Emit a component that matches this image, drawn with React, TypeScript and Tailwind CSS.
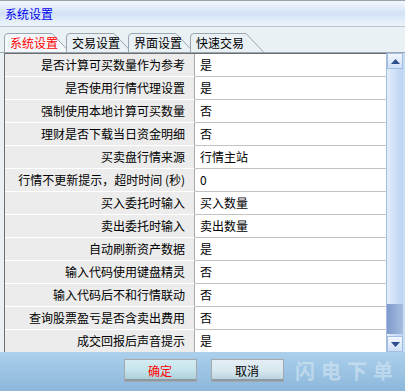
import React from 'react';

const rows: [string, string][] = [
  ['是否计算可买数量作为参考', '是'],
  ['是否使用行情代理设置', '是'],
  ['强制使用本地计算可买数量', '否'],
  ['理财是否下载当日资金明细', '否'],
  ['买卖盘行情来源', '行情主站'],
  ['行情不更新提示，超时时间 (秒)', '0'],
  ['买入委托时输入', '买入数量'],
  ['卖出委托时输入', '卖出数量'],
  ['自动刷新资产数据', '是'],
  ['输入代码使用键盘精灵', '否'],
  ['输入代码后不和行情联动', '否'],
  ['查询股票盈亏是否含卖出费用', '否'],
  ['成交回报后声音提示', '是'],
];

const tabs = ['系统设置', '交易设置', '界面设置', '快速交易'];

function Tab({ label, active, width }: { label: string; active: boolean; width: number }) {
  return (
    <div className="relative h-[19px] -mr-[4px]" style={{ width }}>
      <svg className="absolute inset-0" width={width} height={19}>
        <path
          d={`M0.5,19 L0.5,4 Q0.5,0.5 4,0.5 L${width - 18},0.5 L${width - 0.5},19`}
          fill={active ? '#f4f8fb' : '#e9f1f5'}
          stroke="#9aa6b0"
          strokeWidth="1"
        />
      </svg>
      <span
        className={`relative block pl-[6px] pt-[2px] text-[12px] leading-[15px] ${active ? 'text-[#ff0000]' : 'text-black'}`}
      >
        {label}
      </span>
    </div>
  );
}

function Arrow({ up }: { up: boolean }) {
  return (
    <div className="h-[16px] flex items-center justify-center bg-gradient-to-b from-[#f2f7fd] to-[#cfdff5] border border-[#a6bde3]">
      <svg width="9" height="5">
        <path d={up ? 'M0,5 L4.5,0 L9,5 Z' : 'M0,0 L4.5,5 L9,0 Z'} fill="#2a4f8c" />
      </svg>
    </div>
  );
}

export default function App() {
  return (
    <div
      className="w-[405px] h-[391px] overflow-hidden flex flex-col bg-[#e9f1f5]"
      style={{ fontFamily: '"Noto Sans CJK SC", "Noto Sans", sans-serif' }}
    >
      {/* title bar */}
      <div className="h-[27px] shrink-0 border-t border-[#9aa4ae] bg-gradient-to-b from-[#f4f8fc] via-[#d2e3f6] to-[#eef4fa] border-b border-b-[#b8c6d2] flex items-center pl-[5px]">
        <span className="text-[12px] text-[#0000ee]">系统设置</span>
      </div>

      {/* tabs */}
      <div className="h-[26px] shrink-0 flex items-end pl-[4px] border-b border-[#9aa6b0]">
        {tabs.map((t, i) => (
          <Tab key={t} label={t} active={i === 0} width={i === 3 ? 74 : 66} />
        ))}
      </div>

      {/* grid */}
      <div className="flex ml-[4px] h-[299px] shrink-0 bg-white">
        <div className="w-[382px] border-l border-t border-[#6e6e6e] flex flex-col">
          {rows.map(([label, value]) => (
            <div key={label} className="flex h-[23px] shrink-0 text-[12px] text-black">
              <div className="w-[190px] shrink-0 bg-[#ececec] border-r border-[#a8a8a8] border-b border-b-white flex items-center justify-end pr-[9px] whitespace-nowrap">
                {label}
              </div>
              <div className="flex-1 border-b border-[#c2c2c2] flex items-center pl-[5px]">{value}</div>
            </div>
          ))}
        </div>
        <div className="w-[17px] flex flex-col border-l border-[#a6bde3] bg-gradient-to-r from-[#e3edfa] to-[#bcd3f2]">
          <Arrow up />
          <div className="flex-1 flex flex-col">
            <div className="flex-1" />
            <div className="h-[30px] mb-[2px] bg-gradient-to-r from-[#7f9bcd] to-[#a7bde0]" />
          </div>
          <Arrow up={false} />
        </div>
        <div className="flex-1 bg-[#c5def3]" />
      </div>

      {/* buttons */}
      <div className="relative flex-1 bg-gradient-to-b from-[#acd0ec] to-[#8cb7db] flex justify-center items-start pt-[7px] gap-[14px] pl-[2px]">
        <button className="w-[73px] h-[23px] border border-[#a4a8ac] bg-gradient-to-b from-[#d4ebf2] via-[#c4e4ec] to-[#a9c9d4] text-[12px] text-[#ff0000] shadow-[inset_0_-2px_0_#8b9aa3]">
          确定
        </button>
        <button className="w-[73px] h-[23px] border border-[#a4a8ac] bg-gradient-to-b from-[#e4eef4] via-[#d8e8f0] to-[#b4cfdc] text-[12px] text-black shadow-[inset_0_-2px_0_#8b9aa3]">
          取消
        </button>
        <span className="absolute right-[6px] top-[9px] text-[20px] leading-none tracking-[6px] text-[#d6e8f4]/60 font-bold">
          闪电下单
        </span>
      </div>
    </div>
  );
}
